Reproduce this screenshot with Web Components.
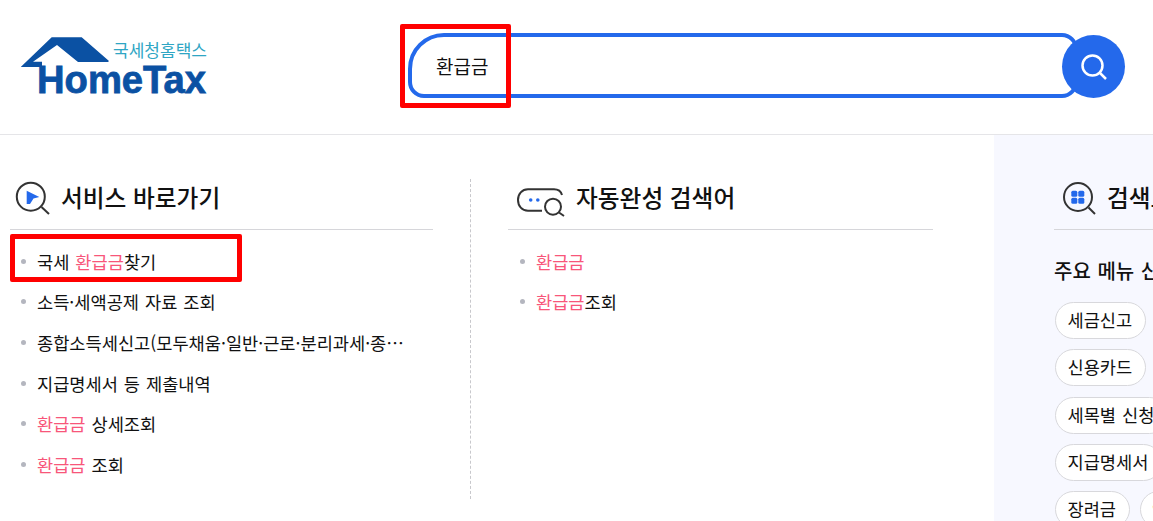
<!DOCTYPE html>
<html lang="ko">
<head>
<meta charset="utf-8">
<title>HomeTax</title>
<style>
  html, body { margin: 0; height: 100%; overflow: hidden; background: #fff; }
  body { font-family: "Noto Sans CJK KR", "Noto Sans", sans-serif; color: #111; position: relative; }
</style>
</head>
<body>
<search-page></search-page>

<script>
const ICONS = {
  play: `<svg width="36" height="36" viewBox="0 0 36 36" fill="none" overflow="visible"><circle cx="14.800" cy="17.700" r="14" stroke="#333" stroke-width="2"/><path d="M25.500 28l7.500 7" stroke="#333" stroke-width="2"/><path d="M10.700 11.700L23.300 18l-5.800 1.600L14 25h-3.300z" fill="#2469eb"/></svg>`,
  chat: `<svg width="48" height="36" viewBox="0 0 48 36" fill="none" overflow="visible"><path d="M25 31.700H11C5 31.700 1 27 1 21S5 10.300 11 10.300h26c4 0 7 2.200 8 5.700" stroke="#333" stroke-width="2"/><circle cx="36" cy="27.700" r="8" stroke="#333" stroke-width="2"/><path d="M42 33.500l5 3.500" stroke="#333" stroke-width="2"/><circle cx="13.700" cy="21" r="1.800" fill="#2469eb"/><circle cx="20.800" cy="21" r="1.800" fill="#2469eb"/></svg>`,
  grid: `<svg width="36" height="36" viewBox="0 0 36 36" fill="none" overflow="visible"><circle cx="16" cy="18" r="14" stroke="#333" stroke-width="2"/><path d="M26.500 28.500l6.500 6.500" stroke="#333" stroke-width="2"/><g fill="#2469eb"><rect x="9.300" y="11.700" width="6" height="6" rx="1.500"/><rect x="16.300" y="11.700" width="6" height="6" rx="1.500"/><rect x="9.300" y="18.700" width="6" height="6" rx="1.500"/><rect x="16.300" y="18.700" width="6" height="6" rx="1.500"/></g></svg>`
};

class HomeLogo extends HTMLElement {
  constructor() {
    super();
    this.attachShadow({ mode: 'open' }).innerHTML = `
      <style>
        :host { display: block; width: 200px; height: 70px; }
        svg { display: block; }
      </style>
      <svg width="200" height="70" viewBox="0 0 200 70">
        <path d="M1 33.700L31.700 4.300h30L89 28l-1 1H58L37 12 13 28.700h9V34H1z" fill="#0b51a3"/>
        <text x="93" y="24" font-family="'Noto Sans CJK KR', sans-serif" font-size="17" fill="#2fa6c4" textLength="94" lengthAdjust="spacingAndGlyphs">국세청홈택스</text>
        <text x="17" y="60" font-family="'Liberation Sans', sans-serif" font-weight="700" font-size="38" fill="#0b51a3" textLength="169" lengthAdjust="spacingAndGlyphs" stroke="#0b51a3" stroke-width=".8">HomeTax</text>
      </svg>`;
  }
}

class SearchBox extends HTMLElement {
  constructor() {
    super();
    this.attachShadow({ mode: 'open' }).innerHTML = `
      <style>
        :host { display: block; position: relative; width: 717px; height: 65px; }
        .field {
          box-sizing: border-box; width: 670px; height: 65px;
          border: 4px solid #2469eb;
          border-radius: 36px 16px 16px 16px;
          padding: 0 24px; display: flex; align-items: center;
          font-size: 19px; color: #111;
        }
        button {
          position: absolute; left: 654px; top: 2px;
          width: 63px; height: 63px; padding: 0; border: 0; border-radius: 50%;
          background: #2469eb; display: flex; align-items: center; justify-content: center;
        }
      </style>
      <div class="field"><slot></slot></div>
      <button aria-label="검색">
        <svg width="28" height="28" viewBox="0 0 28 28" fill="none" stroke="#fff" stroke-width="2.500"><circle cx="12.500" cy="12.500" r="10"/><path d="M20 20l6 6"/></svg>
      </button>`;
  }
}

class SiteHeader extends HTMLElement {
  constructor() {
    super();
    this.attachShadow({ mode: 'open' }).innerHTML = `
      <style>
        :host {
          display: flex; box-sizing: border-box; height: 135px;
          border-bottom: 1px solid #e5e5e8; background: #fff;
          padding: 33px 0 0 20px;
        }
        home-logo { margin-right: 188px; }
      </style>
      <home-logo></home-logo>
      <search-box>환급금</search-box>`;
  }
}

class PanelTitle extends HTMLElement {
  constructor() {
    super();
    this.attachShadow({ mode: 'open' }).innerHTML = `
      <style>
        :host {
          display: flex; align-items: center; gap: var(--ico-gap, 9px); box-sizing: border-box;
          height: 51px; padding-bottom: 14px;
          border-bottom: 1px solid #d6d6da;
          font-size: 23.700px; line-height: 36px; font-weight: 500; color: #111; white-space: nowrap;
        }
        .ico { display: flex; margin-left: var(--ico-left, 6px); }
      </style>
      <span class="ico"><slot name="icon"></slot></span>
      <span><slot></slot></span>`;
  }
}

class ResultItem extends HTMLElement {
  constructor() {
    super();
    this.attachShadow({ mode: 'open' }).innerHTML = `
      <style>
        :host {
          display: flex; align-items: center; height: 40.600px;
          font-size: 17.600px; word-spacing: 1px; color: #111; white-space: nowrap;
        }
        :host::before {
          content: ""; flex: none; width: 5px; height: 5px; border-radius: 50%;
          background: #b4b6bf; margin: 0 11px 0 11px;
        }
        span { overflow: hidden; text-overflow: ellipsis; max-width: 369px; }
      </style>
      <span><slot></slot></span>`;
  }
}

class HitWord extends HTMLElement {
  constructor() {
    super();
    this.attachShadow({ mode: 'open' }).innerHTML = `
      <style>:host { color: #f8567a; }</style><slot></slot>`;
  }
}

class TagPill extends HTMLElement {
  constructor() {
    super();
    this.attachShadow({ mode: 'open' }).innerHTML = `
      <style>
        :host {
          display: inline-flex; align-items: center; box-sizing: border-box; height: 37px;
          padding: 0 12.500px 2px 11.500px; border: 1px solid #d8d8dc; border-radius: 19px;
          background: #fff; font-size: 17.600px; word-spacing: 1px; color: #111; white-space: nowrap;
          flex: none;
        }
      </style>
      <slot></slot>`;
  }
}

class SearchPage extends HTMLElement {
  constructor() {
    super();
    this.attachShadow({ mode: 'open' }).innerHTML = `
      <style>
        :host { display: block; position: relative; width: 1153px; height: 521px; overflow: hidden; }
        .body { display: grid; grid-template-columns: 470px 1px 523px 1fr; height: 386px; }
        .col { padding-top: 44px; }
        .one { padding-left: 10px; padding-right: 37px; }
        .line { border-left: 1px dashed #c8c8cc; height: 320px; margin-top: 44px; }
        .two { padding-left: 37px; padding-right: 61px; }
        .two ul { padding-left: 1px; }
        .three { background: #f7f8ff; padding-left: 60px; overflow: hidden; }
        ul { margin: 0; padding: 11px 0 0; }
        h3 { margin: 27px 0 17px; font-size: 20px; font-weight: 500; line-height: 28px; word-spacing: 1px; white-space: nowrap; }
        .tags { display: flex; flex-direction: column; gap: 10.250px; align-items: flex-start; margin-left: 1px; }
        .row { display: flex; gap: 10px; }
        .mark { position: absolute; box-sizing: border-box; border: 5px solid #f00; border-radius: 2px; pointer-events: none; }
        .mark.a { left: 400px; top: 24px; width: 111px; height: 84px; }
        .mark.b { left: 10px; top: 234px; width: 232px; height: 48px; }
        svg { display: block; }
      </style>
      <site-header></site-header>
      <div class="body">
        <section class="col one">
          <panel-title><span slot="icon">${ICONS.play}</span>서비스 바로가기</panel-title>
          <ul>
            <result-item>국세 <hit-word>환급금</hit-word>찾기</result-item>
            <result-item>소득·세액공제 자료 조회</result-item>
            <result-item>종합소득세신고(모두채움·일반·근로·분리과세·종합과세)</result-item>
            <result-item>지급명세서 등 제출내역</result-item>
            <result-item><hit-word>환급금</hit-word> 상세조회</result-item>
            <result-item><hit-word>환급금</hit-word> 조회</result-item>
          </ul>
        </section>
        <div class="line"></div>
        <section class="col two">
          <panel-title style="--ico-left: 9px; --ico-gap: 11px"><span slot="icon">${ICONS.chat}</span>자동완성 검색어</panel-title>
          <ul>
            <result-item><hit-word>환급금</hit-word></result-item>
            <result-item><hit-word>환급금</hit-word>조회</result-item>
          </ul>
        </section>
        <section class="col three">
          <panel-title style="--ico-left: 8px; --ico-gap: 9px"><span slot="icon">${ICONS.grid}</span>검색도움말</panel-title>
          <h3>주요 메뉴 신고</h3>
          <div class="tags">
            <div class="row"><tag-pill>세금신고</tag-pill></div>
            <div class="row"><tag-pill>신용카드</tag-pill></div>
            <div class="row"><tag-pill>세목별 신청</tag-pill></div>
            <div class="row"><tag-pill>지급명세서</tag-pill></div>
            <div class="row"><tag-pill>장려금</tag-pill><tag-pill>연말정산</tag-pill></div>
          </div>
        </section>
      </div>
      <div class="mark a"></div>
      <div class="mark b"></div>`;
  }
}

customElements.define('home-logo', HomeLogo);
customElements.define('search-box', SearchBox);
customElements.define('site-header', SiteHeader);
customElements.define('panel-title', PanelTitle);
customElements.define('result-item', ResultItem);
customElements.define('hit-word', HitWord);
customElements.define('tag-pill', TagPill);
customElements.define('search-page', SearchPage);
</script>
</body>
</html>
